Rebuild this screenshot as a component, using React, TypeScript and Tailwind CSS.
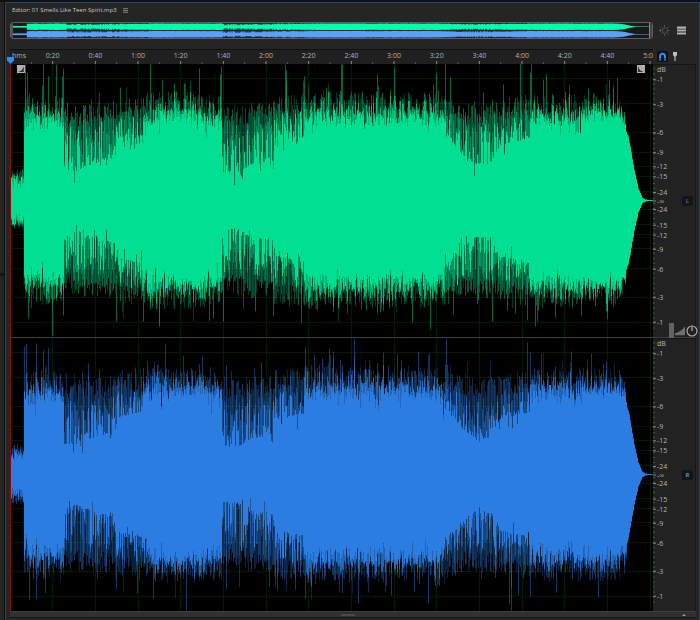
import type { CSSProperties } from "react"

type Point = [number, number]

// Track length in seconds and drawing size of one channel
const DURATION = 301.4
const WIDTH = 643
const HEIGHT = 273
const MID = HEIGHT / 2

// Solid body of the wave: [x, amplitude]
const body: Point[] = [
  [0, 19], [13, 21], [14, 70], [53, 72], [54, 31], [66, 30], [80, 36], [106, 43], [107, 57], [136, 64],
  [137, 73], [150, 76], [190, 79], [198, 70], [211, 66], [212, 28], [228, 28], [240, 36], [263, 40],
  [264, 55], [293, 61], [294, 73], [330, 75], [370, 73], [400, 77], [428, 73], [440, 60], [452, 46],
  [464, 37], [480, 37], [490, 56], [519, 62], [520, 76], [555, 74], [575, 78], [608, 80], [614, 74],
  [618, 63], [621, 47], [624, 30], [628, 12], [632, 3], [635, 1], [643, 0],
]

// Height that the transients reach
const peaks: Point[] = [
  [0, 27], [13, 29], [14, 95], [53, 96], [54, 86], [106, 91], [107, 95], [136, 95], [137, 101], [211, 98],
  [212, 86], [263, 91], [264, 96], [293, 98], [294, 101], [435, 98], [455, 90], [490, 90], [520, 98],
  [608, 98], [614, 86], [618, 69], [621, 50], [624, 32], [628, 13], [632, 3], [635, 1], [643, 0],
]

const channels = [
  {
    name: "L",
    seed: 11,
    wave: "text-[#00df92]",
    label: "text-[#2c6d94]",
    up: [
      [15, 136], [17, 128], [33, 136], [38, 124], [46, 136], [52, 124], [53, 132], [110, 113], [140, 136],
      [152, 121], [174, 117], [189, 132], [210, 126], [211, 134], [275, 136], [276, 130], [294, 124],
      [331, 136], [332, 136], [367, 126], [384, 133], [426, 127], [435, 136], [440, 123], [473, 108],
      [493, 116], [510, 137], [520, 128], [521, 136], [533, 121], [536, 126], [599, 121], [603, 112],
    ] as Point[],
    down: [
      [18, 118], [42, 135], [53, 115], [106, 121], [133, 121], [149, 126], [203, 118], [213, 121],
      [263, 116], [291, 122], [307, 110], [367, 113], [402, 122], [420, 129], [482, 121], [497, 110],
      [517, 120], [525, 126], [545, 117], [571, 115],
    ] as Point[],
  },
  {
    name: "R",
    seed: 47,
    wave: "text-[#2c7de1]",
    label: "text-[#3a9ad8]",
    up: [
      [14, 128], [16, 131], [26, 131], [33, 124], [38, 126], [155, 131], [137, 113], [173, 119],
      [295, 128], [319, 126], [323, 123], [344, 136], [387, 120], [408, 123], [419, 121], [436, 136],
      [435, 110], [517, 132], [520, 122], [531, 121], [561, 123], [581, 121], [596, 113],
    ] as Point[],
    down: [
      [19, 125], [26, 125], [35, 119], [106, 115], [127, 119], [176, 136], [216, 115], [267, 116],
      [285, 115], [295, 124], [332, 119], [348, 129], [381, 121], [418, 129], [499, 130], [501, 136],
      [508, 121], [520, 122], [546, 118], [588, 123],
    ] as Point[],
  },
]

const shades = ["opacity-25", "opacity-35", "opacity-45", "opacity-70"]

const times = Array.from({ length: 14 }, (_, i) => {
  const s = (i + 1) * 20
  return `${Math.floor(s / 60)}:${String(s % 60).padStart(2, "0")}`
})

const decibels = [-1, -3, -6, -9, -12, -15, -24]
const gain = (db: number) => Math.pow(10, db / 20)

// Scale marks from top to bottom, pos runs from 0 to 1
const marks = [
  { text: "dB", pos: 0.018 },
  ...decibels.map((db) => ({ text: String(db), pos: (1 - gain(db)) / 2 })),
  { text: "-∞", pos: 0.5 },
  ...[...decibels].reverse().map((db) => ({ text: String(db), pos: (1 + gain(db)) / 2 })),
]

function random(seed: number) {
  let s = seed * 7919
  return () => {
    s = (s * 16807 + 11) % 2147483647
    return s / 2147483647
  }
}

function valueAt(points: Point[], x: number) {
  for (let i = 1; i < points.length; i++) {
    const [x0, y0] = points[i - 1]
    const [x1, y1] = points[i]
    if (x <= x1) return y0 + ((y1 - y0) * (x - x0)) / (x1 - x0)
  }
  return 0
}

function buildSide(seed: number, dir: number, spikes: Point[]) {
  const rnd = random(seed)
  const tails = ["", "", "", ""]
  // both halves overlap a little so that no seam shows on the zero line
  const base = MID - dir * 0.5
  let solid = `M0 ${base}`
  for (let x = 0; x < WIDTH; x++) {
    const b = valueAt(body, x)
    const p = valueAt(peaks, x)
    const gap = p - b
    const r = rnd()
    const fade = x > 616
    // quiet parts show single drum hits, so the body jumps between floor and peak there
    let core = b + gap * (gap > 32 ? Math.pow(r, 3) * 0.8 : r * 0.65) - (rnd() < 0.16 ? 14 * rnd() : 0)
    if (fade) core = b
    if (x < 14) core = b - 7 + r * 12
    let top = p + (rnd() - 0.58) * 22
    if (rnd() < 0.13) top += rnd() * 18
    if (fade) top = b + gap * rnd()
    if (x < 14) top = p - 6 + rnd() * 9
    core = Math.max(core, 0)
    top = Math.max(top, core)
    const middle = core + (top - core) * rnd() * 0.8
    const y = (a: number) => (MID + dir * a).toFixed(1)
    solid += `V${y(core)}H${x + 1}`
    const shade = Math.floor(rnd() * 3)
    tails[shade] += `M${x + 0.5} ${y(core)}V${y(top)}`
    tails[gap > 32 ? 1 + Math.floor(rnd() * 2) : 3] += `M${x + 0.5} ${y(core)}V${y(middle)}`
  }
  for (const [x, a] of spikes) tails[2] += `M${x + 0.5} ${MID + dir * 75}V${MID + dir * a}`
  return { solid: `${solid}V${base}Z`, tails }
}

function Waveform({ channel }: { channel: (typeof channels)[number] }) {
  const sides = [buildSide(channel.seed, -1, channel.up), buildSide(channel.seed + 5, 1, channel.down)]
  return (
    <svg
      className="block min-h-0 w-full flex-1 bg-black"
      viewBox={`1 0 ${WIDTH - 1} ${HEIGHT}`}
      preserveAspectRatio="none"
      role="img"
      aria-label={`Waveform ${channel.name}`}
    >
      <g stroke="#001c06" shapeRendering="crispEdges">
        {marks.slice(1).map((m) => (
          <line key={m.pos} x1="0" x2={WIDTH} y1={m.pos * HEIGHT} y2={m.pos * HEIGHT} />
        ))}
        {Array.from({ length: 15 }, (_, i) => {
          const x = (((i + 1) * 20) / DURATION) * WIDTH
          return <line key={i} x1={x} x2={x} y1="0" y2={HEIGHT} />
        })}
      </g>
      <g className={channel.wave}>
        {sides.map((side, i) => (
          <g key={i}>
            {side.tails.map((d, n) => (
              <path key={n} d={d} className={shades[n]} stroke="currentColor" fill="none" />
            ))}
            <path d={side.solid} fill="currentColor" />
          </g>
        ))}
      </g>
    </svg>
  )
}

function overviewPath(seed: number, mid: number) {
  const rnd = random(seed)
  let bright = ""
  let dim = ""
  for (let x = 0; x < WIDTH; x++) {
    const b = valueAt(body, x) / 28
    const p = valueAt(peaks, x) / 28
    const a = x < 14 ? 0.8 : Math.max(0.3, p - b > 0.9 && rnd() < 0.6 ? b + 0.7 : p - rnd() * 0.4)
    bright += `M${x} ${mid - a}H${x + 1.2}V${mid + a}H${x}Z`
    dim += `M${x} ${mid - p}H${x + 1.2}V${mid + p}H${x}Z`
  }
  return { bright, dim }
}

function Overview() {
  const left = overviewPath(3, 4)
  const right = overviewPath(8, 12)
  return (
    <div className="flex h-[17px] min-w-0 flex-1 items-stretch rounded-[3px] border border-[#606060] bg-black">
      <div className="w-[2px] shrink-0 rounded-l-xs bg-[#555]" />
      <svg
        className="block h-full min-w-0 flex-1 bg-[#191919]"
        viewBox={`0 0 ${WIDTH} 16`}
        preserveAspectRatio="none"
        role="img"
        aria-label="Overview"
      >
        <path d={left.dim} fill="#006a48" />
        <path d={left.bright} fill="#00ffae" />
        <path d={right.dim} fill="#26487a" />
        <path d={right.bright} fill="#5aa0ff" />
      </svg>
      <div className="w-[3px] shrink-0 rounded-r-xs border-l border-[#858585] bg-[#444]" />
    </div>
  )
}

function TimeRuler() {
  return (
    <div className="flex h-[15px] min-w-0 flex-1 flex-col border-t border-[#111] bg-[#202020]">
      <div className="flex h-[11px] items-center text-[7px] leading-none text-[#b0b0b0]">
        <div className="min-w-0 grow-10 basis-0">
          <span className="pl-[2px]">hms</span>
        </div>
        {times.map((time) => (
          <div key={time} className="min-w-0 grow-20 basis-0 text-center">
            {time}
          </div>
        ))}
        {/* only the start of the last mark fits */}
        <div className="flex min-w-0 grow-[11.4] basis-0 justify-end">5:0</div>
      </div>
      <svg className="block h-[3px] w-full" viewBox={`0 0 ${WIDTH} 3`} preserveAspectRatio="none" aria-hidden="true">
        {Array.from({ length: 30 }, (_, i) => {
          const x = (((i + 1) * 10) / DURATION) * WIDTH
          return <line key={i} x1={x} x2={x} y1={i % 2 ? 0 : 1} y2="3" stroke={i % 2 ? "#8a8a8a" : "#5c5c5c"} />
        })}
      </svg>
    </div>
  )
}

function DecibelScale() {
  return (
    <div className="flex min-h-0 w-[26px] shrink-0">
      <svg className="block h-full w-[4px]" viewBox={`0 0 4 ${HEIGHT}`} preserveAspectRatio="none" aria-hidden="true">
        {Array.from({ length: 53 }, (_, i) => (
          <line key={i} x1="0" x2="2" y1={4 + i * 5} y2={4 + i * 5} stroke="#505050" />
        ))}
        {marks.slice(1).map((m) => (
          <line key={m.pos} x1="0" x2="3" y1={m.pos * HEIGHT} y2={m.pos * HEIGHT} stroke="#8a8a8a" />
        ))}
      </svg>
      <div className="flex flex-col text-[7px] leading-none text-[#b4b4b4]">
        {marks.map((m, i) => {
          const gap: CSSProperties = { flexGrow: (m.pos - (i ? marks[i - 1].pos : 0)) * 100 }
          return (
            <div key={i} className="flex min-h-0 basis-0 flex-col justify-end" style={gap}>
              <span className="flex h-0 items-center">{m.text}</span>
            </div>
          )
        })}
        <div className="basis-0" style={{ flexGrow: (1 - marks[marks.length - 1].pos) * 100 }} />
      </div>
    </div>
  )
}

function FadeHandle({ side }: { side: "in" | "out" }) {
  return (
    <button
      aria-label={side === "in" ? "Fade in" : "Fade out"}
      className={side === "in" ? "absolute top-px left-[6px]" : "absolute top-px right-[8px]"}
    >
      <svg className="block size-[8px]" viewBox="0 0 8 8">
        <rect width="8" height="8" fill="#b0b0b0" />
        {side === "in" ? (
          <path d="M1 7Q5.5 6 6.8 1V7Z" fill="#333" />
        ) : (
          <path d="M1 1Q2 6 7 7H1Z" fill="#333" />
        )}
      </svg>
    </button>
  )
}

function VolumeHud() {
  return (
    <div className="absolute right-[-2px] bottom-[-1px] flex items-center gap-px">
      <div className="h-[15px] w-[5px] bg-[#626262]" />
      <svg className="block h-[10px] w-[10px]" viewBox="0 0 10 10" aria-hidden="true">
        <path d="M0 9.3V7.3Q6 5.5 10 .5V9.3Z" fill="#6e6e6e" />
      </svg>
      <button aria-label="Adjust amplitude">
        <svg className="block size-[12px]" viewBox="0 0 12 12" fill="none" stroke="#a8a8a8">
          <circle cx="6" cy="6" r="5" strokeWidth="1.2" />
          <path d="M6 1V6" strokeWidth="1.3" />
        </svg>
      </button>
    </div>
  )
}

export default function App() {
  return (
    <div className="flex h-screen bg-[#111] pt-[2px] font-['Open_Sans','Noto_Sans',sans-serif] text-[#a8a8a8]">
      <div className="flex w-[5px] shrink-0 flex-col border-r border-[#0c0c0c] bg-[#242424]">
        <div className="grow-44" />
        <div className="h-[3px] bg-[#151515]" />
        <div className="grow-56" />
      </div>
      <main className="flex min-w-0 flex-1 flex-col border border-b-0 border-[#25466f] bg-[#252525] pl-[4px]">
        <header className="flex h-[14px] items-center gap-[6px] pl-[2px]">
          <h1 className="text-[6px] leading-none font-medium text-[#c8c8c8]">
            Editor: 01 Smells Like Teen Spirit.mp3
          </h1>
          <button aria-label="Panel menu">
            <svg className="block size-[5px]" viewBox="0 0 5 5" stroke="#999" strokeWidth=".8">
              <path d="M0 .7H5M0 2.5H5M0 4.3H5" />
            </svg>
          </button>
        </header>

        <div className="mt-[5px] flex h-[17px] items-center">
          <Overview />
          <div className="flex w-[46px] shrink-0 items-center gap-[7px] pl-[6px]">
            <button aria-label="Zoom to selection">
              <svg className="block size-[11px]" viewBox="0 0 11 11" fill="none" stroke="#666">
                <path d="M0 5.5H2.5M1.5 4V7M5.5 0V2.5M5.5 8.5V11" strokeWidth=".7" />
                <circle cx="6" cy="5.5" r="2.4" strokeDasharray="1.4 .8" />
                <path d="M8 3.5L9.7 1.7M8 7.5L10 9.5M8.5 5.5H10.8M3.7 3.5L2.5 2.2M3.7 7.5L2.6 9" strokeWidth=".7" />
              </svg>
            </button>
            <button aria-label="Show list">
              <svg className="block h-[9px] w-[9px]" viewBox="0 0 9 9" fill="#b0b0b0">
                <path d="M0 .5H9V2.7H0ZM0 3.5H9V5.6H0ZM0 6.4H9V8.6H0Z" />
              </svg>
            </button>
          </div>
        </div>

        <div className="relative mt-[10px] flex h-[15px]">
          <TimeRuler />
          <div className="flex w-[46px] shrink-0 items-center gap-[4px] pl-[4px]">
            <button aria-label="Snapping" aria-pressed="true" className="rounded-xs bg-[#111] p-px">
              <svg className="block size-[9px]" viewBox="0 0 9 9" fill="none">
                <path d="M2 8.5V4.2A2.5 2.5 0 0 1 7 4.2V8.5" stroke="#2f8df5" strokeWidth="2" />
                <path d="M.8 6.8H3.2M5.8 6.8H8.2" stroke="#111" strokeWidth=".6" />
              </svg>
            </button>
            <button aria-label="Add marker">
              <svg className="block h-[9px] w-[6px]" viewBox="0 0 6 9" fill="#c0c0c0">
                <path d="M1 0H5V3.2L3.6 4.6V9H2.4V4.6L1 3.2Z" />
              </svg>
            </button>
          </div>
          {/* Playhead */}
          <svg className="absolute bottom-0 left-[-3px] z-10 block h-[8px] w-[7px]" viewBox="0 0 7 8" aria-hidden="true">
            <path d="M0 1H7V4.5L3.5 8L0 4.5Z" fill="#2f8df0" />
          </svg>
        </div>

        <div className="mr-[3px] flex min-h-0 flex-1 flex-col">
          {channels.map((channel) => (
            <section key={channel.name} className="relative flex min-h-0 flex-1 border-b border-[#3f3f3f]">
              <div className="relative flex min-w-0 flex-1 flex-col border-l border-[#8c0812]">
                <Waveform channel={channel} />
                {channel.name === "L" && <FadeHandle side="in" />}
                {channel.name === "L" && <FadeHandle side="out" />}
              </div>
              <div className="flex w-[43px] shrink-0 border-t border-r border-[#151515] bg-[#222]">
                <DecibelScale />
                <div className="flex flex-1 items-center justify-end pr-[2px]">
                  <button
                    aria-label={`Channel ${channel.name}`}
                    className="h-[10px] w-[11px] rounded-xs bg-[#151515] text-center text-[6px] leading-none font-bold"
                  >
                    <span className={channel.label}>{channel.name}</span>
                  </button>
                </div>
              </div>
              {channel.name === "L" && <VolumeHud />}
            </section>
          ))}
        </div>

        {/* Horizontal scroll bar */}
        <div className="mr-[3px] flex h-[5px] shrink-0 items-center bg-[#303030]">
          <div className="flex-1" />
          <div className="h-[2px] w-[14px] bg-[#4a4a4a]" />
          <div className="flex flex-1 justify-end pr-[10px]">
            <svg className="block h-[2px] w-[4px]" viewBox="0 0 4 2" aria-hidden="true">
              <path d="M0 2L2 0L4 2Z" fill="#999" />
            </svg>
          </div>
        </div>
        <div className="mr-[3px] h-[3px] shrink-0 border-t border-[#151515]" />
      </main>
    </div>
  )
}
